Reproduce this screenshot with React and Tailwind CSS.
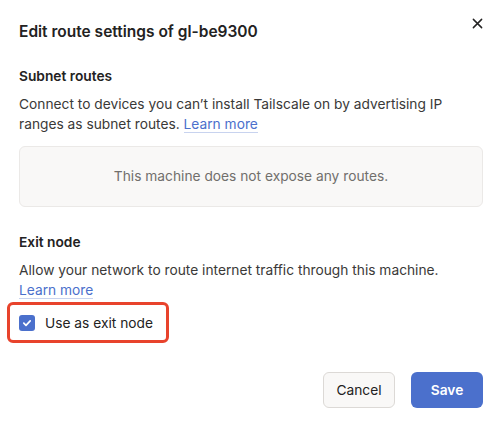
import React from "react";

export default function App() {
  return (
    <div className="w-[504px] h-[428px] bg-white text-[#232222] relative" style={{ fontFamily: "Inter, 'Noto Sans', sans-serif" }}>
      <button className="absolute left-[470px] top-[16px] w-[14px] h-[14px] flex items-center justify-center text-[#232222]">
        <svg width="11" height="11" viewBox="0 0 12 12" fill="none" stroke="currentColor" strokeWidth="1.6" strokeLinecap="round">
          <path d="M1.5 1.5L10.5 10.5M10.5 1.5L1.5 10.5" />
        </svg>
      </button>
      <div className="pl-[19px] pr-[21px] pt-[20px] flex flex-col">
        <h2 className="text-[15.5px] leading-[24px] font-semibold">Edit route settings of gl-be9300</h2>
        <h3 className="mt-[22px] text-[13.75px] leading-[20px] font-semibold">Subnet routes</h3>
        <p className="mt-[8px] text-[13.75px] leading-[20px] text-[#3a3938]">
          Connect to devices you can’t install Tailscale on by advertising IP ranges as subnet routes.{" "}
          <a className="whitespace-nowrap text-[#4b70cc] border-b border-[#c8d3ef]">Learn more</a>
        </p>
        <div className="mt-[12px] h-[61px] rounded-[6px] border border-[#ebe9e7] bg-[#f9f8f7] flex items-center justify-center text-[13.75px] text-[#716f6c]">
          This machine does not expose any routes.
        </div>
        <h3 className="mt-[25px] text-[13.75px] leading-[20px] font-semibold">Exit node</h3>
        <p className="mt-[8px] text-[13.75px] leading-[20px] text-[#3a3938]">
          Allow your network to route internet traffic through this machine.{" "}
          <a className="whitespace-nowrap text-[#4b70cc] border-b border-[#c8d3ef]">Learn more</a>
        </p>
        <div className="mt-[2px] -ml-[12px] self-start inline-flex items-center gap-[10px] border-[3px] border-[#e8432c] rounded-[6px] pl-[9px] pr-[13px] h-[41px]">
          <span className="w-[16px] h-[16px] rounded-[3px] bg-[#4b70cc] flex items-center justify-center">
            <svg width="10" height="10" viewBox="0 0 10 10" fill="none" stroke="white" strokeWidth="1.7" strokeLinecap="round" strokeLinejoin="round">
              <path d="M1.8 5.2L4 7.3L8.2 2.8" />
            </svg>
          </span>
          <span className="text-[13.75px] leading-[20px] text-[#232222]">Use as exit node</span>
        </div>
        <div className="mt-[29px] flex justify-end gap-[16px]">
          <button className="w-[72px] h-[36px] rounded-[6px] border border-[#dcd9d6] bg-[#f9f8f7] text-[13.75px] text-[#232222]">Cancel</button>
          <button className="w-[72px] h-[36px] rounded-[6px] bg-[#4b70cc] text-[13.75px] font-semibold text-white">Save</button>
        </div>
      </div>
    </div>
  );
}
